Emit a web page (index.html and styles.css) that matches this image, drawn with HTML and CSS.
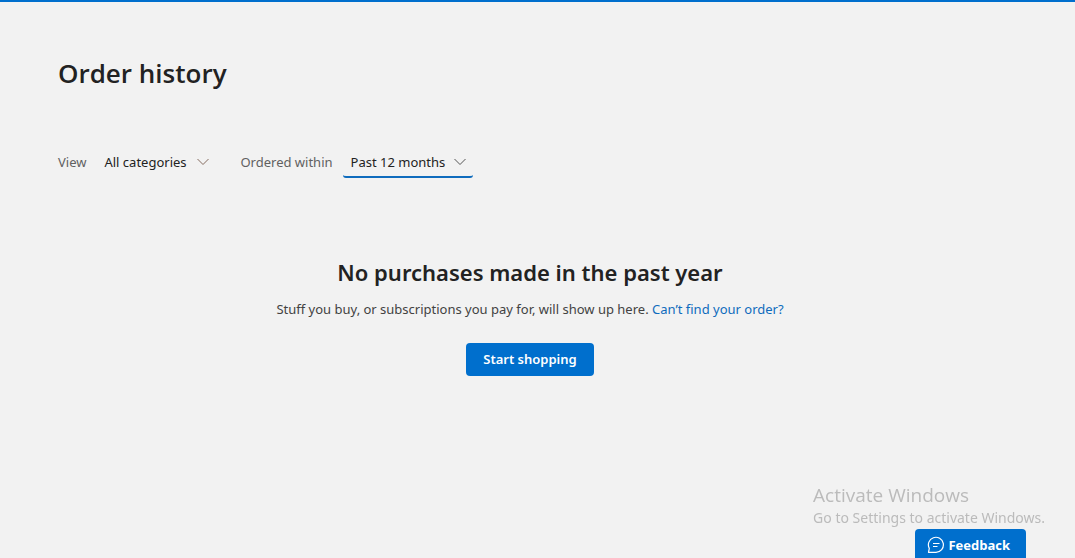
FILE: index.html
```html
<!DOCTYPE html>
<html lang="en">
<head>
<meta charset="utf-8">
<meta name="viewport" content="width=device-width, initial-scale=1">
<title>Order history</title>
<link rel="stylesheet" href="styles.css">
</head>
<body>
<main class="page">
  <h1 class="page-title">Order history</h1>
  <form class="filters">
    <div class="filter">
      <label class="filter-label" for="category">View</label>
      <div class="dropdown dropdown-category">
        <select class="dropdown-select" id="category"><option>All categories</option></select>
        <svg class="dropdown-chevron" viewBox="0 0 14 8" aria-hidden="true"><path d="M1.500 1l5.500 5.500L12.500 1"/></svg>
      </div>
    </div>
    <div class="filter">
      <label class="filter-label" for="period">Ordered within</label>
      <div class="dropdown dropdown-period dropdown-active">
        <select class="dropdown-select" id="period"><option>Past 12 months</option></select>
        <svg class="dropdown-chevron" viewBox="0 0 14 8" aria-hidden="true"><path d="M1.500 1l5.500 5.500L12.500 1"/></svg>
      </div>
    </div>
  </form>
  <section class="empty">
    <h2 class="empty-title">No purchases made in the past year</h2>
    <p class="empty-text">Stuff you buy, or subscriptions you pay for, will show up here. <a class="link" href="#">Can’t find your order?</a></p>
    <button class="shop-button" type="button">Start shopping</button>
  </section>
</main>
<aside class="watermark">
  <p class="watermark-title">Activate Windows</p>
  <p class="watermark-text">Go to Settings to activate Windows.</p>
</aside>
<button class="feedback" type="button">
  <svg class="feedback-icon" viewBox="0 0 18 18" aria-hidden="true"><path d="M1.500 16.300L2.300 12.400A7.500 7.500 0 1 1 9 16.300ZM6 7.500h6.500M6 10.500h4.500"/></svg>
  Feedback
</button>
</body>
</html>
```
FILE: styles.css
```css
* {
  box-sizing: border-box;
}

body {
  margin: 0;
  min-height: 100vh;
  border-top: 2px solid #006fcd;
  background: #f2f2f2;
  color: #222;
  font: 13px/20px "Noto Sans", "Open Sans", sans-serif;
}

h1, h2, p {
  margin: 0;
}

button, select {
  font: inherit;
}

.page {
  padding: 53px 73px 0 58px;
}

.page-title {
  font-family: "Open Sans", "Noto Sans", sans-serif;
  font-size: 26px;
  font-weight: 600;
  line-height: 36px;
}

.filters {
  display: flex;
  flex-wrap: wrap;
  gap: 24px;
  margin-top: 55px;
}

.filter {
  display: flex;
  align-items: center;
  gap: 10px;
}

.filter-label {
  color: #616161;
}

.dropdown {
  display: grid;
  align-items: center;
  height: 32px;
  padding-top: 2px;
  border-bottom: 2px solid transparent;
  border-radius: 3px;
}

.dropdown-category {
  width: 120px;
}

.dropdown-period {
  width: 130px;
}

.dropdown-active {
  border-bottom-color: #0f6cbd;
}

.dropdown-select {
  grid-area: 1 / 1;
  width: 100%;
  padding: 0 24px 0 8px;
  border: 0;
  appearance: none;
  background: transparent;
  color: #222;
}

.dropdown-chevron {
  grid-area: 1 / 1;
  justify-self: end;
  width: 14px;
  height: 8px;
  margin-right: 6px;
  fill: none;
  stroke: #555;
  pointer-events: none;
}

.dropdown-category .dropdown-chevron {
  stroke: #866c60;
}

.empty {
  display: flex;
  flex-direction: column;
  align-items: center;
  padding-top: 78px;
  text-align: center;
}

.empty-title {
  font-size: 22px;
  font-weight: 600;
  line-height: 32px;
}

.empty-text {
  margin-top: 11px;
  color: #424242;
}

.link {
  color: #0f6cbd;
  text-decoration: none;
}

.shop-button {
  margin-top: 24px;
  padding: 6px 17px;
  border: 0;
  border-radius: 4px;
  background: #006fcd;
  color: #fff;
  font-weight: 600;
  line-height: 21px;
}

.watermark {
  position: fixed;
  right: 30px;
  bottom: 30px;
  color: #bbb;
}

.watermark-title {
  font-family: "Open Sans", "Noto Sans", sans-serif;
  font-size: 19px;
  line-height: 25px;
}

.watermark-text {
  font-size: 14px;
  line-height: 20px;
}

.feedback {
  position: fixed;
  right: 49px;
  bottom: 0;
  display: flex;
  align-items: center;
  gap: 3px;
  height: 29px;
  padding: 3px 16px 0 12px;
  border: 0;
  border-radius: 4px 4px 0 0;
  background: #006fcd;
  color: #fff;
  font-family: "Open Sans", "Noto Sans", sans-serif;
  font-weight: 700;
}

.feedback-icon {
  width: 18px;
  height: 18px;
  fill: none;
  stroke: currentColor;
  stroke-width: 1.2;
  stroke-linejoin: round;
}
```
